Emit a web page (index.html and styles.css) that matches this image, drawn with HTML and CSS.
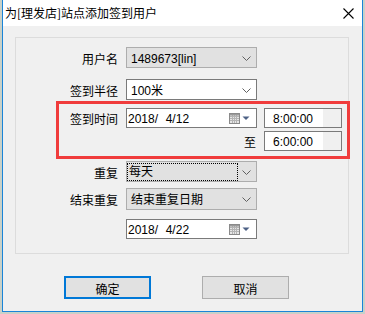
FILE: index.html
```html
<!DOCTYPE html>
<html>
<head>
<meta charset="utf-8">
<link rel="stylesheet" href="styles.css">
</head>
<body>
<div class="window">
  <div class="titlebar">
    <span class="title">为[理发店]站点添加签到用户</span>
    <svg class="close" width="11" height="11" viewBox="0 0 11 11"><path d="M0.5 0.5 L10.5 10.5 M10.5 0.5 L0.5 10.5" stroke="#000" stroke-width="1.1" fill="none"/></svg>
  </div>
  <div class="group">
    <div class="row r1">
      <div class="lbl">用户名</div>
      <div class="combo gray"><span class="txt">1489673[lin]</span><svg class="chev" width="9" height="5" viewBox="0 0 9 5"><polyline points="0.5,0.5 4.5,4.5 8.5,0.5" stroke="#606060" fill="none"/></svg></div>
    </div>
    <div class="row r2">
      <div class="lbl">签到半径</div>
      <div class="combo white"><span class="txt">100米</span><svg class="chev" width="9" height="5" viewBox="0 0 9 5"><polyline points="0.5,0.5 4.5,4.5 8.5,0.5" stroke="#606060" fill="none"/></svg></div>
    </div>
    <div class="row r3">
      <div class="lbl">签到时间</div>
      <div class="date"><span class="txt dt">2018/  4/12</span>
        <svg class="cal" width="22" height="11" viewBox="0 0 22 11">
          <rect x="0.5" y="0.5" width="10" height="10" fill="#e6e6e6" stroke="#8a8a8a"/>
          <path d="M1 3.5 H10 M1 5.5 H10 M1 7.5 H10 M3.5 1 V10 M5.5 1 V10 M7.5 1 V10" stroke="#b4b4b4" stroke-width="1"/>
          <path d="M1 1 H10 V2.5 H1 Z" fill="#9a9a9a"/>
          <polygon points="13.5,3.5 20.5,3.5 17,7" fill="#4d6185"/>
        </svg>
      </div>
      <div class="time"><span class="ttxt">8:00:00</span><span class="spin"></span></div>
    </div>
    <div class="row r4">
      <div class="lbl"></div>
      <div class="to">至</div>
      <div class="time"><span class="ttxt">6:00:00</span><span class="spin"></span></div>
    </div>
    <div class="row r5">
      <div class="lbl">重复</div>
      <div class="combo gray"><span class="txt focus">每天</span><svg class="chev" width="9" height="5" viewBox="0 0 9 5"><polyline points="0.5,0.5 4.5,4.5 8.5,0.5" stroke="#606060" fill="none"/></svg></div>
    </div>
    <div class="row r6">
      <div class="lbl">结束重复</div>
      <div class="combo gray"><span class="txt">结束重复日期</span><svg class="chev" width="9" height="5" viewBox="0 0 9 5"><polyline points="0.5,0.5 4.5,4.5 8.5,0.5" stroke="#606060" fill="none"/></svg></div>
    </div>
    <div class="row r7">
      <div class="lbl"></div>
      <div class="date"><span class="txt dt">2018/  4/22</span>
        <svg class="cal" width="22" height="11" viewBox="0 0 22 11">
          <rect x="0.5" y="0.5" width="10" height="10" fill="#e6e6e6" stroke="#8a8a8a"/>
          <path d="M1 3.5 H10 M1 5.5 H10 M1 7.5 H10 M3.5 1 V10 M5.5 1 V10 M7.5 1 V10" stroke="#b4b4b4" stroke-width="1"/>
          <path d="M1 1 H10 V2.5 H1 Z" fill="#9a9a9a"/>
          <polygon points="13.5,3.5 20.5,3.5 17,7" fill="#4d6185"/>
        </svg>
      </div>
    </div>
  </div>
  <div class="buttons">
    <button class="btn primary">确定</button>
    <button class="btn">取消</button>
  </div>
  <div class="highlight"></div>
</div>
</body>
</html>
```

FILE: styles.css
```css
html, body {
  margin: 0;
  padding: 0;
}
body {
  background: #c9d1c8;
  width: 365px;
  height: 314px;
  overflow: hidden;
  font-family: "Liberation Sans", "Noto Sans CJK SC", sans-serif;
  font-size: 12px;
  color: #000;
}
.window {
  position: relative;
  margin-left: 2px;
  width: 361px;
  height: 312px;
  box-sizing: border-box;
  border: 1px solid #1a84d8;
  border-top: none;
  background: #f0f0f0;
}
.titlebar {
  height: 26px;
  background: #fff;
  display: flex;
  align-items: center;
  justify-content: space-between;
  padding-left: 2px;
  padding-right: 8px;
}
.title {
  font-family: "Noto Sans CJK SC", sans-serif;
  font-size: 12px;
  line-height: 14px;
}
.close {
  display: block;
  margin-top: 1px;
}
.group {
  margin: 11px 0 0 12px;
  width: 334px;
  height: 217px;
  box-sizing: border-box;
  border: 1px solid #dcdcdc;
  padding-top: 9px;
}
.row {
  display: flex;
  align-items: center;
  height: 21px;
}
.r2 { margin-top: 11px; }
.r3 { margin-top: 8px; height: 20px; }
.r4 { margin-top: 3px; height: 20px; }
.r5 { margin-top: 10px; }
.r6 { margin-top: 6px; height: 22px; }
.r7 { margin-top: 9px; height: 20px; }
.lbl {
  width: 102px;
  margin-right: 8px;
  text-align: right;
  font-family: "Noto Sans CJK SC", sans-serif;
  line-height: 14px;
  padding-top: 2px;
}
.combo, .date {
  width: 131px;
  height: 100%;
  box-sizing: border-box;
  display: flex;
  align-items: center;
  justify-content: space-between;
}
.combo {
  padding: 0 5px 0 4px;
}
.combo.gray {
  background: #e1e1e1;
  border: 1px solid #adadad;
}
.combo.white {
  background: #fff;
  border: 1px solid #7a7a7a;
}
.date {
  background: #fff;
  border: 1px solid #7a7a7a;
  padding: 0 5px 0 1px;
}
.txt {
  line-height: 14px;
  padding-top: 2px;
  font-family: "Liberation Sans", "Noto Sans CJK SC", sans-serif;
}
.dt {
  white-space: pre;
  word-spacing: 0.5px;
}
.focus {
  margin-left: -3px;
  width: 109px;
  box-sizing: border-box;
  outline: 1px dotted #000;
  outline-offset: 0;
  padding: 1px 0 1px 1px;
  line-height: 14px;
}
.chev {
  display: block;
  margin-top: 1px;
}
.cal {
  display: block;
}
.time {
  margin-left: 7px;
  width: 78px;
  height: 100%;
  box-sizing: border-box;
  border: 1px solid #7a7a7a;
  background: #fff;
  display: flex;
  align-items: stretch;
  justify-content: space-between;
}
.ttxt {
  padding-left: 8px;
  padding-top: 3px;
  line-height: 14px;
}
.spin {
  width: 18px;
  background: #f0f0f0;
}
.to {
  width: 131px;
  text-align: right;
  font-family: "Noto Sans CJK SC", sans-serif;
  line-height: 14px;
  padding-top: 2px;
  padding-right: 1px;
  box-sizing: border-box;
}
.buttons {
  display: flex;
  margin-top: 22px;
  margin-left: 61px;
  gap: 51px;
}
.btn {
  width: 87px;
  height: 23px;
  box-sizing: border-box;
  background: #e1e1e1;
  border: 1px solid #adadad;
  font-family: "Noto Sans CJK SC", sans-serif;
  font-size: 12px;
  color: #000;
  padding: 1px 0 0 0;
  margin: 0;
}
.btn.primary {
  border: 2px solid #0078d7;
}
.highlight {
  position: absolute;
  left: 53px;
  top: 101px;
  width: 294px;
  height: 58px;
  box-sizing: border-box;
  border: 3px solid #f03c3c;
}
```
